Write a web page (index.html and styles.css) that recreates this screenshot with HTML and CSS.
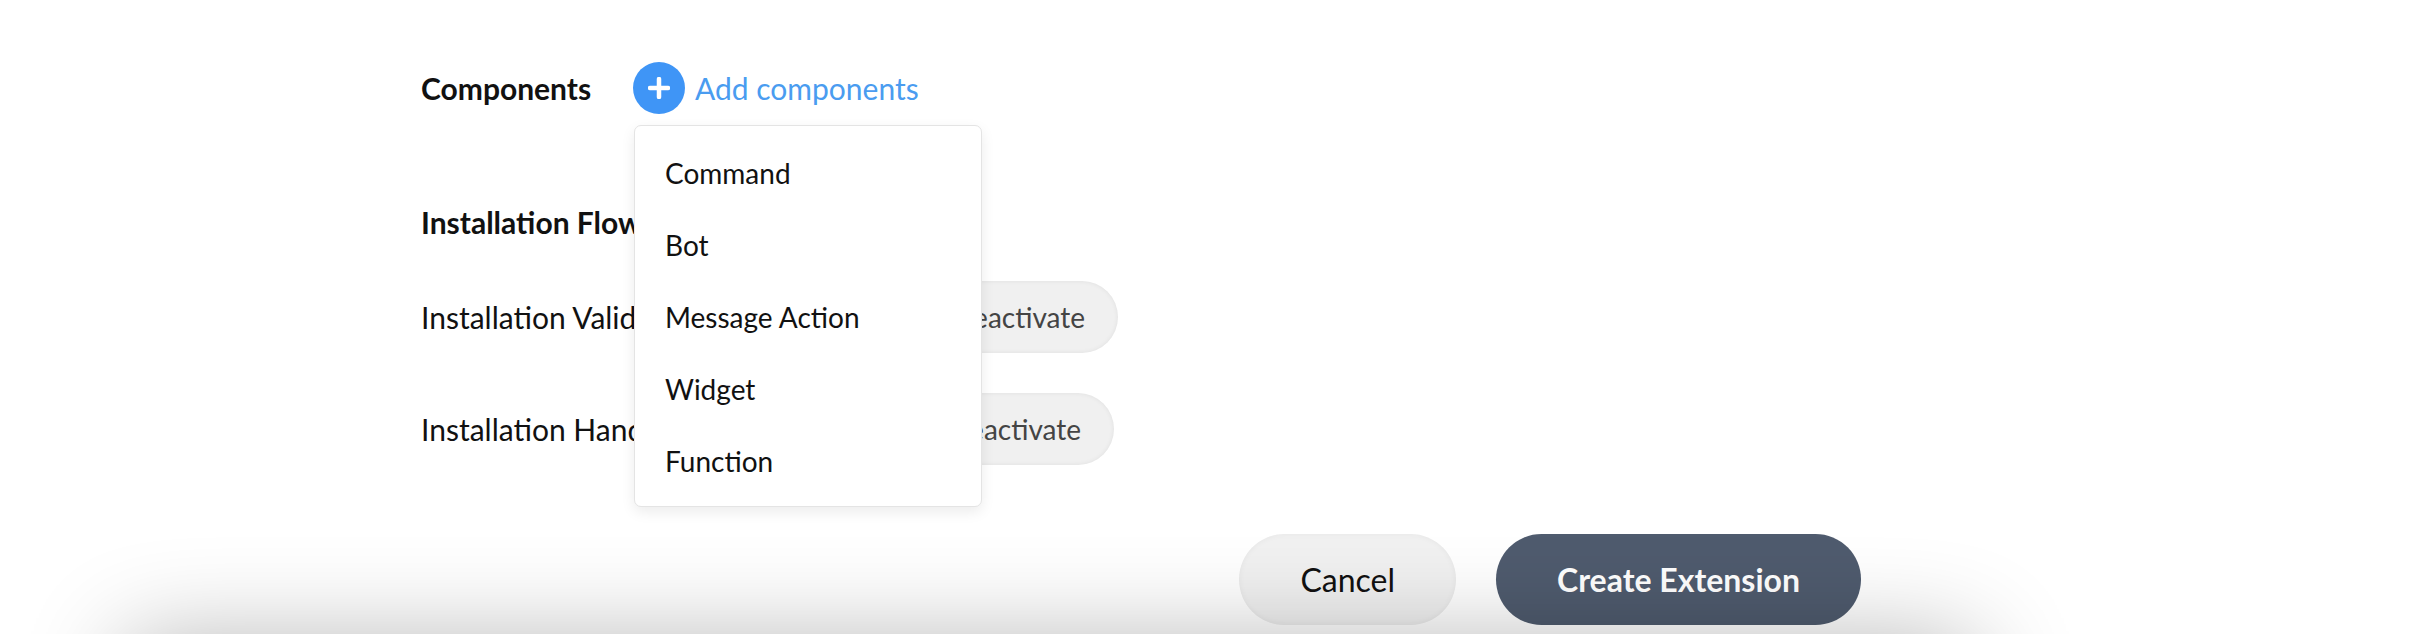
FILE: index.html
```html
<!DOCTYPE html>
<html lang="en">
<head>
    <meta charset="UTF-8">
    <meta name="viewport" content="width=device-width, initial-scale=1.0">
    <title>Create Extension</title>
    <link rel="stylesheet" href="styles.css">
</head>
<body>

    <div class="form">
        <div class="components-row">
            <span class="field-label">Components</span>
            <div class="add-wrap">
                <a href="#" class="add-link">
                    <span class="add-icon">
                        <svg width="22" height="22" viewBox="0 0 22 22">
                            <path d="M11 2v18M2 11h18" stroke="#fff" stroke-width="4.5" stroke-linecap="round"/>
                        </svg>
                    </span>
                    Add components
                </a>
                <ul class="menu">
                    <li>Command</li>
                    <li>Bot</li>
                    <li>Message Action</li>
                    <li>Widget</li>
                    <li>Function</li>
                </ul>
            </div>
        </div>

        <h3 class="section-title">Installation Flow</h3>

        <div class="setting-row">
            <span class="setting-label">Installation Validation</span>
            <button class="toggle-btn">Deactivate</button>
        </div>
        <div class="setting-row setting-row-tight">
            <span class="setting-label">Installation Handler</span>
            <button class="toggle-btn">Deactivate</button>
        </div>

        <div class="actions">
            <button class="btn btn-cancel">Cancel</button>
            <button class="btn btn-primary">Create Extension</button>
        </div>
    </div>

    <!-- next panel sits just under the fold, only its shadow shows -->
    <div class="panel-below"></div>

</body>
</html>
```

FILE: styles.css
```css
* {
    margin: 0;
    padding: 0;
    box-sizing: border-box;
}
html, body {
    height: 100%;
    overflow: hidden;
}
body {
    font-family: Lato, "Open Sans", Arial, sans-serif;
    background-color: #ffffff;
    color: #111;
}
.form {
    margin-left: 421px;
    width: 1440px;
    padding-top: 62px;
}
.components-row {
    display: flex;
    align-items: center;
    height: 52px;
    margin-bottom: 91px;
}
.field-label {
    width: 212px;
    font-size: 30px;
    font-weight: bold;
}
.add-wrap {
    position: relative;
}
.add-link {
    display: flex;
    align-items: center;
    gap: 10px;
    text-decoration: none;
    color: #4a9cf0;
    font-size: 30px;
}
.add-icon {
    width: 52px;
    height: 52px;
    border-radius: 50%;
    background-color: #3f95f6;
    display: flex;
    align-items: center;
    justify-content: center;
}
.menu {
    position: absolute;
    top: calc(100% + 11px);
    left: 1px;
    width: 348px;
    list-style: none;
    background-color: #fff;
    border: 1px solid #e4e4e4;
    border-radius: 7px;
    box-shadow: 0 5px 14px rgba(0, 0, 0, 0.08);
    padding: 11px 0 9px;
    z-index: 5;
}
.menu li {
    height: 72px;
    line-height: 72px;
    padding-left: 30px;
    font-size: 28px;
    color: #111;
}
.section-title {
    font-size: 30px;
    font-weight: bold;
    line-height: 34px;
    margin-bottom: 42px;
}
.setting-row {
    display: grid;
    grid-template-columns: 498px auto;
    align-items: center;
    justify-items: start;
    height: 72px;
    margin-bottom: 40px;
}
.setting-row-tight {
    grid-template-columns: 494px auto;
}
.setting-label {
    font-size: 30px;
}
.toggle-btn {
    height: 72px;
    padding: 0 33px;
    border: none;
    border-radius: 36px;
    background-color: #f0f0f0;
    box-shadow: inset 0 0 5px rgba(0, 0, 0, 0.07);
    font-family: inherit;
    font-size: 28px;
    color: #444;
}
.actions {
    display: flex;
    justify-content: flex-end;
    gap: 40px;
    margin-top: 69px;
}
.btn {
    height: 91px;
    padding: 0 61px;
    border: none;
    border-radius: 46px;
    font-family: inherit;
    font-size: 32px;
    cursor: pointer;
}
.btn-cancel {
    background-color: #f1f1f1;
    color: #111;
    box-shadow: inset 0 0 6px rgba(0, 0, 0, 0.05);
}
.btn-primary {
    background-color: #4f5b6e;
    color: #fff;
    font-weight: bold;
}
.panel-below {
    position: fixed;
    left: 125px;
    width: 1850px;
    top: 642px;
    height: 200px;
    background-color: #fff;
    box-shadow: 0 0 100px rgba(0, 0, 0, 0.3);
    pointer-events: none;
    z-index: 10;
}
```
